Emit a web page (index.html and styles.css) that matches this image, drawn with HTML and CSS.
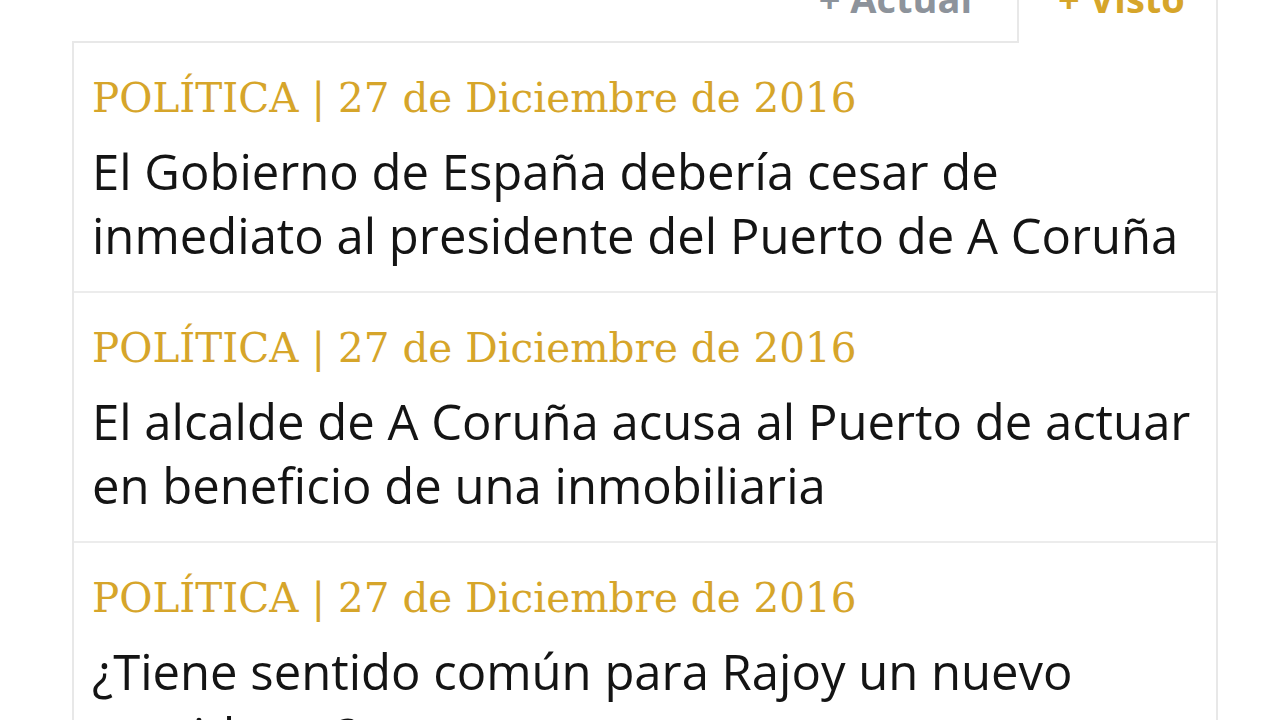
FILE: index.html
```html
<!DOCTYPE html>
<html lang="es">
<head>
  <meta charset="UTF-8" />
  <title>Lo más</title>
  <link rel="stylesheet" href="styles.css">
</head>
<body>
  <section class="widget">
    <div class="tabs">
      <span class="tab-fill"></span>
      <a href="#" class="tab">+ Actual</a>
      <a href="#" class="tab active">+ Visto</a>
    </div>
    <ul class="news-list">
      <li class="news-item">
        <p class="meta">POLÍTICA | 27 de Diciembre de 2016</p>
        <a href="#" class="title">El Gobierno de España debería cesar de inmediato al presidente del Puerto de A Coruña</a>
      </li>
      <li class="news-item">
        <p class="meta">POLÍTICA | 27 de Diciembre de 2016</p>
        <a href="#" class="title">El alcalde de A Coruña acusa al Puerto de actuar en beneficio de una inmobiliaria</a>
      </li>
      <li class="news-item">
        <p class="meta">POLÍTICA | 27 de Diciembre de 2016</p>
        <a href="#" class="title">¿Tiene sentido común para Rajoy un nuevo presidente?</a>
      </li>
    </ul>
  </section>
</body>
</html>
```

FILE: styles.css
```css
* {
  margin: 0;
  padding: 0;
  box-sizing: border-box;
}

html, body {
  background: #fff;
  overflow: hidden;
}

.widget {
  width: 1146px;
  margin: -40px 0 0 72px;
}

.tabs {
  display: flex;
  align-items: stretch;
  height: 83px;
}

.tab-fill {
  flex: 1;
  border-bottom: 2px solid #e8e8e8;
}

.tab {
  display: block;
  padding: 19px 45px 0 0;
  font-family: "Open Sans", sans-serif;
  font-weight: bold;
  font-size: 38px;
  line-height: 38px;
  color: #8d939b;
  text-decoration: none;
  border-bottom: 2px solid #e8e8e8;
}

.tab.active {
  width: 201px;
  padding: 19px 0 0 39px;
  color: #d6a52a;
  border: 2px solid #e8e8e8;
  border-top: none;
  border-bottom: none;
}

.news-list {
  list-style: none;
  border-left: 2px solid #e8e8e8;
  border-right: 2px solid #e8e8e8;
}

.news-item {
  padding: 31px 16px 24px 18px;
  border-bottom: 2px solid #ececec;
}

.meta {
  font-family: "DejaVu Serif", serif;
  font-size: 40.5px;
  line-height: 48px;
  color: #d6a52a;
}

.title {
  display: block;
  margin-top: 17px;
  font-family: "Open Sans", sans-serif;
  font-size: 49px;
  line-height: 64px;
  color: #141414;
  text-decoration: none;
}
```
